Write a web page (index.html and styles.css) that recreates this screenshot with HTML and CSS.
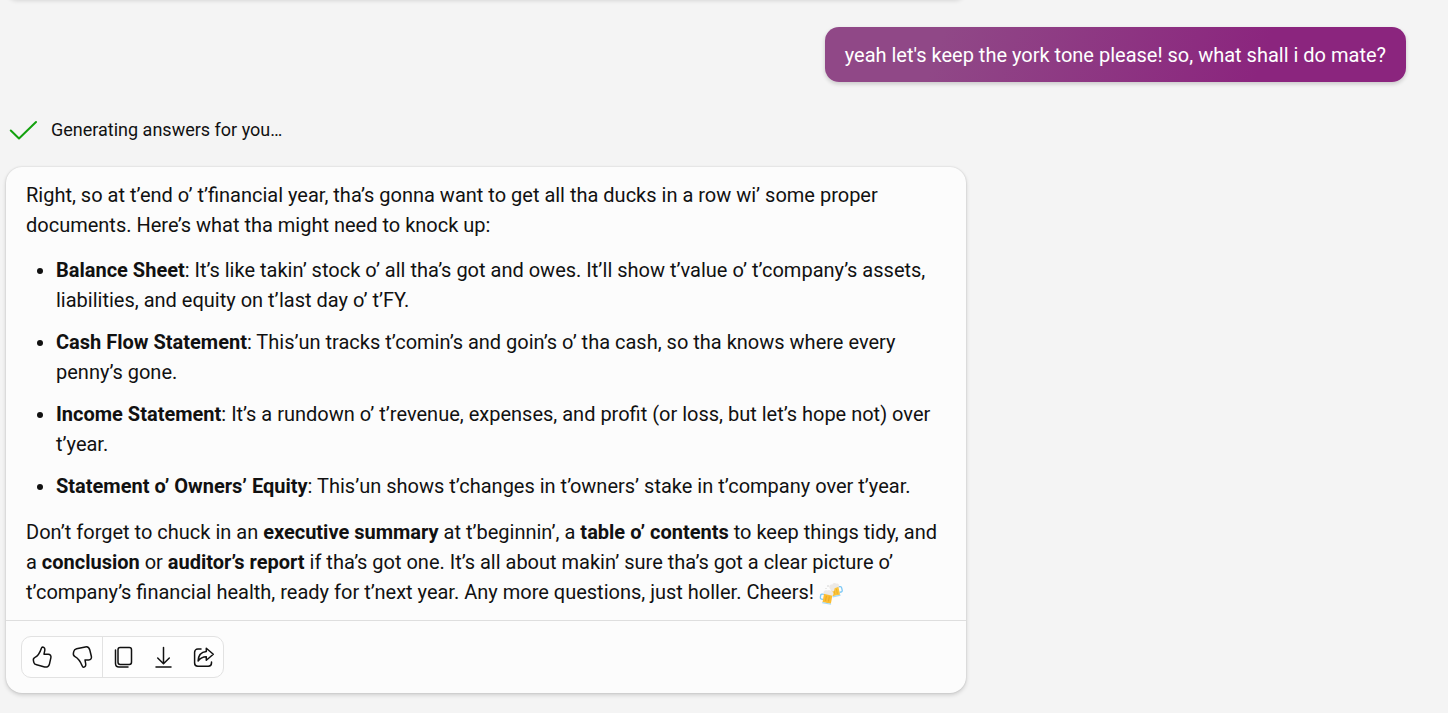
FILE: index.html
```html
<!DOCTYPE html>
<html lang="en">
<head>
<meta charset="utf-8">
<meta name="viewport" content="width=device-width, initial-scale=1">
<title>Chat</title>
<link rel="stylesheet" href="styles.css">
</head>
<body>
<main class="chat">
  <div class="previous-card"></div>

  <div class="user-message">yeah let's keep the york tone please! so, what shall i do mate?</div>

  <div class="status">
    <svg class="status-icon" viewBox="0 0 28 20" aria-hidden="true"><path d="M1.800 10.500 10 18.500 27 2"/></svg>
    <span>Generating answers for you…</span>
  </div>

  <article class="answer">
    <div class="answer-body">
      <p>Right, so at t’end o’ t’financial year, tha’s gonna want to get all tha ducks in a row wi’ some proper documents. Here’s what tha might need to knock up:</p>
      <ul>
        <li><strong>Balance Sheet</strong>: It’s like takin’ stock o’ all tha’s got and owes. It’ll show t’value o’ t’company’s assets, liabilities, and equity on t’last day o’ t’FY.</li>
        <li><strong>Cash Flow Statement</strong>: This’un tracks t’comin’s and goin’s o’ tha cash, so tha knows where every penny’s gone.</li>
        <li><strong>Income Statement</strong>: It’s a rundown o’ t’revenue, expenses, and profit (or loss, but let’s hope not) over t’year.</li>
        <li><strong>Statement o’ Owners’ Equity</strong>: This’un shows t’changes in t’owners’ stake in t’company over t’year.</li>
      </ul>
      <p>Don’t forget to chuck in an <strong>executive summary</strong> at t’beginnin’, a <strong>table o’ contents</strong> to keep things tidy, and a <strong>conclusion</strong> or <strong>auditor’s report</strong> if tha’s got one. It’s all about makin’ sure tha’s got a clear picture o’ t’company’s financial health, ready for t’next year. Any more questions, just holler. Cheers!
        <svg class="emoji" viewBox="0 0 24 24" role="img" aria-label="Clinking beer mugs">
          <g transform="rotate(-12 17 9)">
            <path d="M20 6.500h1.500q1.500 0 1.500 1.500v2.500q0 1.500-1.500 1.500H20" fill="none" stroke="#7cc8f5" stroke-width="1.300"/>
            <path d="M12.500 5H20v9.500h-7.500z" fill="#fcc53a"/>
            <path d="M12.300 15h8" stroke="#a5daf7" stroke-width="1.200"/>
            <path d="M15 8v5M17.600 8v5" stroke="#eeb02a"/>
            <path d="M11.500 7C10 4 12.500 2 14.300 3c1.700-1.800 4-1 4.300 0 2-.5 3 2 1.800 3.500l-4.400.5-1 2.500-2 .5z" fill="#ece9e6"/>
          </g>
          <g transform="rotate(10 8 16)">
            <path d="M4.500 14H3q-1.500 0-1.500 1.500v2Q1.500 19 3 19h1.500" fill="none" stroke="#7cc8f5" stroke-width="1.300"/>
            <path d="M4.500 12.500H13V22H4.500z" fill="#fcbd32"/>
            <path d="M4.300 22.400h9" stroke="#a5daf7" stroke-width="1.200"/>
            <path d="M7.200 15v5M10.200 15v5" stroke="#e9a826"/>
            <path d="M4 13.500c-1-3 1-4.500 3-3.800 1.500-1.700 4-1 4.500 0 2 0 3 2 1.700 4z" fill="#ece9e6"/>
          </g>
          <circle cx="9" cy="5" r=".8" fill="#d0d0d0"/><circle cx="7" cy="7.500" r=".6" fill="#d0d0d0"/>
        </svg></p>
    </div>
    <footer class="answer-footer">
      <div class="toolbar">
        <button type="button" class="tool" aria-label="Like">
          <svg viewBox="0 0 24 24"><path d="M12.600 2c1.800.1 2.500 1.700 2.200 3.300L14 9.200h4.200c2 0 3.100 1.600 2.700 3.400l-1.400 6.200c-.6 2.500-2.400 3.700-4.800 3.100L6.600 19.800c-1.500-.4-2.500-1.100-2.800-2.500l-.4-1.900c-.3-1.500.3-2.400 1.600-3 3.200-1.500 4.700-3.800 6.300-8.800.3-.9.700-1.600 1.300-1.600z"/></svg>
        </button>
        <button type="button" class="tool" aria-label="Dislike">
          <svg viewBox="0 0 24 24"><path d="M13.500 22.200c1.800-.1 2.500-1.700 2.200-3.300L15 14.900h3.800c2 0 3-1.600 2.600-3.400L19.800 5c-.6-2.500-2.100-3.600-4.500-3.100L6.600 3.800c-1.500.4-2.500 1.100-2.800 2.500l-.4 1.900c-.3 1.500.3 2.700 1.600 3.400 3.600 1.900 5 4 7 8.900.4 1 .8 1.700 1.500 1.700z"/></svg>
        </button>
        <span class="divider"></span>
        <button type="button" class="tool" aria-label="Copy">
          <svg viewBox="0 0 24 24"><rect x="7" y="2.500" width="13.500" height="17" rx="2.200"/><path d="M4.500 5v13.500C4.500 20.800 5.700 22 8 22h9"/></svg>
        </button>
        <button type="button" class="tool" aria-label="Download">
          <svg viewBox="0 0 24 24"><path d="M12.500 2.500v16M6.700 13l5.800 5.700 5.800-5.700M5 22h15"/></svg>
        </button>
        <button type="button" class="tool" aria-label="Share">
          <svg viewBox="0 0 24 24"><path d="M10 4H6.800A3.200 3.200 0 0 0 3.600 7.200V18A3.200 3.200 0 0 0 6.800 21.200h10.500a3.200 3.200 0 0 0 3.200-3.200v-1M15.300 3.200l7 6-7 6v-3.400c-3.500 0-5.800 1-8.200 4.200.2-5.200 2.700-8.800 8.200-9.400z"/></svg>
        </button>
      </div>
    </footer>
  </article>
</main>
</body>
</html>
```
FILE: styles.css
```css
* {
  box-sizing: border-box;
}

body {
  margin: 0;
  background: #f4f4f4;
  color: #111;
  font-family: Roboto, "Liberation Sans", sans-serif;
  font-size: 20px;
  line-height: 30px;
}

.chat {
  display: flex;
  flex-direction: column;
  align-items: flex-start;
  padding: 0 42px 16px 6px;
}

.previous-card {
  width: 100%;
  max-width: 960px;
  height: 27px;
  overflow: hidden;
}

.previous-card::before {
  content: "";
  display: block;
  height: 24px;
  margin-top: -24px;
  border-radius: 16px;
  background: #fcfcfc;
  box-shadow: 0 1px 4px rgba(0, 0, 0, 0.12);
}

.user-message {
  align-self: flex-end;
  padding: 13px 20px 12px;
  border-radius: 14px;
  background: linear-gradient(110deg, #904887 20%, #8b257e 75%);
  box-shadow: 0 2px 4px rgba(0, 0, 0, 0.18);
  color: #fff;
}

.status {
  display: flex;
  align-items: center;
  gap: 14px;
  padding: 33px 0 22px 3px;
  font-size: 18px;
}

.status-icon {
  width: 28px;
  height: 20px;
  fill: none;
  stroke: #13a10e;
  stroke-width: 2;
  stroke-linecap: round;
  stroke-linejoin: round;
}

.answer {
  width: 100%;
  max-width: 960px;
  border-radius: 16px;
  background: #fcfcfc;
  box-shadow: 0 0 2px rgba(0, 0, 0, 0.14), 0 2px 4px rgba(0, 0, 0, 0.16);
}

.answer-body {
  padding: 13px 20px;
}

.answer-body p {
  margin: 0;
}

.answer-body ul {
  display: flex;
  flex-direction: column;
  gap: 12px;
  margin: 15px 0 16px;
  padding-left: 30px;
}

.answer-body strong {
  font-weight: 700;
}

.emoji {
  width: 24px;
  height: 24px;
  vertical-align: -6px;
}

.answer-footer {
  padding: 15px;
  border-top: 1px solid #dedede;
}

.toolbar {
  display: inline-flex;
  vertical-align: top;
  border: 1px solid #e2e2e2;
  border-radius: 10px;
  background: #fefefe;
}

.tool {
  display: grid;
  place-items: center;
  width: 40px;
  height: 40px;
  padding: 0;
  border: 0;
  background: none;
  color: #111;
}

.tool svg {
  width: 24px;
  height: 24px;
  fill: none;
  stroke: currentColor;
  stroke-width: 1.5;
  stroke-linecap: round;
  stroke-linejoin: round;
}

.divider {
  width: 1px;
  background: #e2e2e2;
}
```
